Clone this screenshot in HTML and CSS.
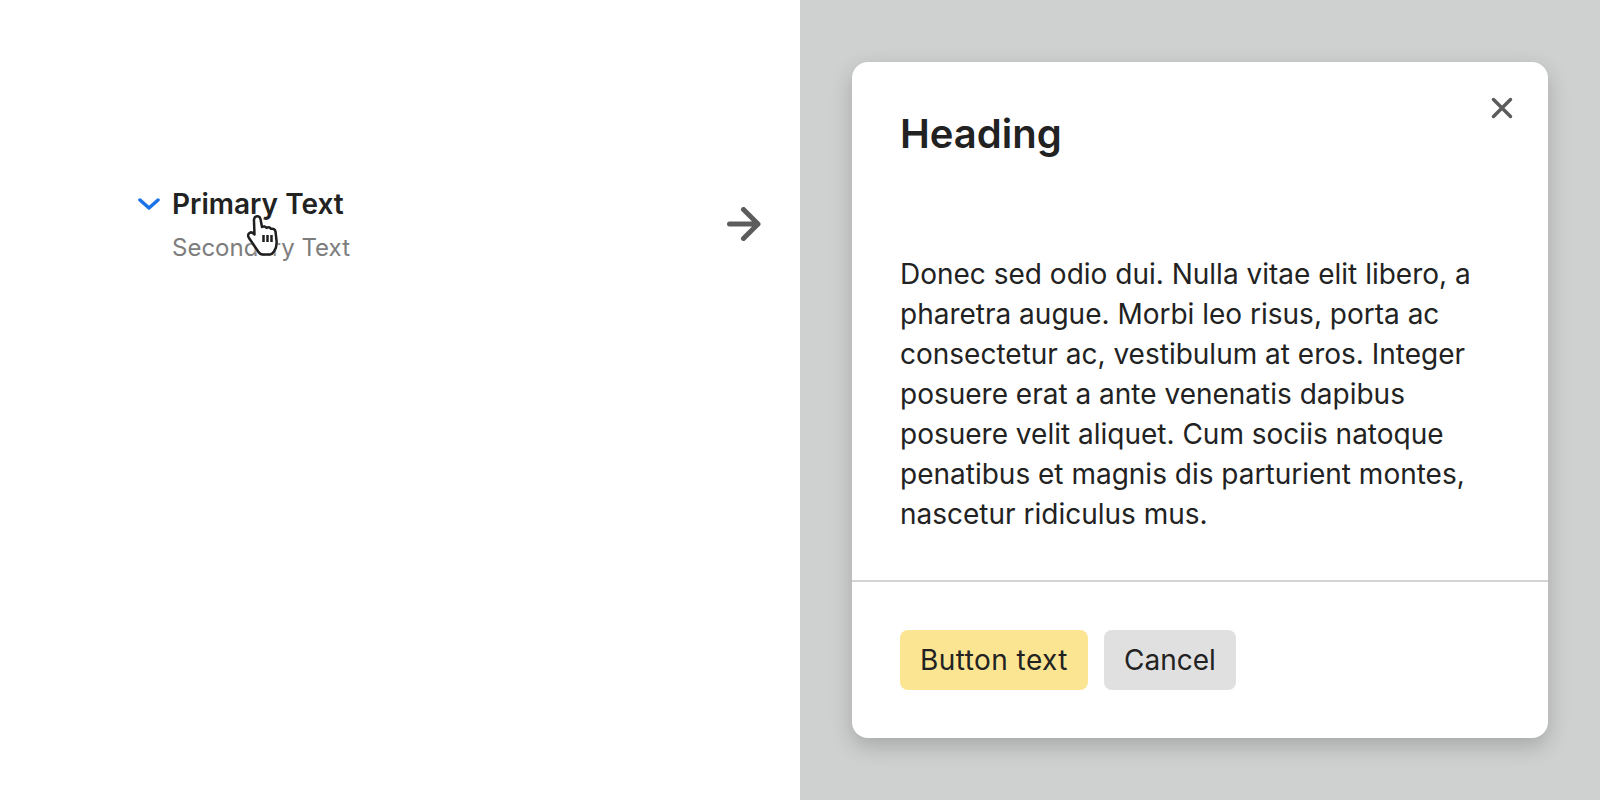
FILE: index.html
```html
<!DOCTYPE html>
<html>
<head>
	<title>Dialog</title>
	<meta charset="utf-8" />
	<link rel="stylesheet" href="styles.css">
</head>
<body>
	<div class="left_panel">
		<div class="tree_item">
			<svg class="chevron" width="22" height="12" viewBox="0 0 22 12"><path d="M2 2l9 8 9-8" /></svg>
			<div class="tree_text">
				<div class="primary_text">Primary Text</div>
				<div class="secondary_text">Secondary Text</div>
			</div>
			<svg class="hand" width="34" height="42" viewBox="0 0 34 42">
				<path class="hand_shape" d="M9 2c2.500-1.500 5-.5 5.500 2l1.500 8c1.500-1 3.500-.8 4.500.8 1.500-.8 3.500-.5 4.500 1 2-.5 4 .5 4.500 2.700l1 9c.5 4-.5 8-2.500 11-1 1.500-2 3-4 3h-7c-2 0-3.500-1-4.500-2.500L3 23c-1.500-2-1-4 .5-5 1.500-1 3.500-.5 5 1.500L8 6C7.800 4.500 8.300 3 9 2z" />
				<path class="hand_bars" d="M17.500 20v7M21.500 20v7M25.500 20v7" />
			</svg>
		</div>
		<svg class="arrow" width="34" height="34" viewBox="0 0 34 34"><path d="M2.500 17H31M16.500 2.500L31 17 16.500 31.500" /></svg>
	</div>
	<div class="right_panel">
		<div class="dialog">
			<div class="dialog_body">
				<div class="dialog_head">
					<h1 class="heading">Heading</h1>
					<svg class="close" width="24" height="24" viewBox="0 0 24 24"><path d="M3.500 3.500l17 17M20.500 3.500l-17 17" /></svg>
				</div>
				<p class="dialog_copy">Donec sed odio dui. Nulla vitae elit libero, a pharetra augue. Morbi leo risus, porta ac consectetur ac, vestibulum at eros. Integer posuere erat a ante venenatis dapibus posuere velit aliquet. Cum sociis natoque penatibus et magnis dis parturient montes, nascetur ridiculus mus.</p>
			</div>
			<div class="dialog_foot">
				<button class="btn btn_primary">Button text</button>
				<button class="btn">Cancel</button>
			</div>
		</div>
	</div>
</body>
</html>
```
FILE: styles.css
```css
html, body { margin: 0; height: 100%; }
body { display: flex; height: 800px; overflow: hidden; font-family: Inter, "Liberation Sans", sans-serif; color: #222; background-color: #fff; }

.left_panel { width: 800px; position: relative; display: flex; align-items: flex-start; justify-content: space-between; padding: 188px 39px 0 138px; box-sizing: border-box; }
.tree_item { display: flex; position: relative; }
.chevron { margin-top: 10px; margin-right: 12px; flex: none; }
.chevron path { fill: none; stroke: #1a73e8; stroke-width: 3.5; stroke-linecap: round; stroke-linejoin: round; }
.primary_text { font-size: 28px; font-weight: 600; line-height: 32px; }
.secondary_text { font-size: 24px; line-height: 32px; margin-top: 12px; color: #7d7d7d; }
.hand { position: absolute; left: 108px; top: 27px; filter: drop-shadow(0 0 2px rgba(255, 255, 255, 0.8)); }
.hand_shape { fill: #fff; stroke: #1f1f1f; stroke-width: 2.500; stroke-linejoin: round; }
.hand_bars { fill: none; stroke: #1f1f1f; stroke-width: 2.500; }
.arrow { margin-top: 19px; }
.arrow path { fill: none; stroke: #5c5c5c; stroke-width: 5; stroke-linecap: round; stroke-linejoin: round; }

.right_panel { width: 800px; background-color: #cfd1d0; padding: 62px 52px; box-sizing: border-box; }
.dialog { width: 696px; height: 676px; background-color: #fff; border-radius: 16px; box-shadow: 0 8px 22px rgba(0, 0, 0, 0.2); display: flex; flex-direction: column; }
.dialog_body { height: 520px; padding: 0 48px; box-sizing: border-box; border-bottom: 2px solid #d4d4d4; flex: none; }
.dialog_head { display: flex; justify-content: space-between; align-items: flex-start; }
.heading { margin: 44px 0 0; font-size: 40px; line-height: 56px; font-weight: 600; }
.close { margin-top: 34px; margin-right: -14px; }
.close path { fill: none; stroke: #5c5c5c; stroke-width: 3.500; stroke-linecap: round; }
.dialog_copy { margin: 92px 0 0; font-size: 28px; line-height: 40px; }
.dialog_foot { display: flex; gap: 16px; padding: 48px; }
.btn { height: 60px; padding: 0 20px; border: 0; border-radius: 8px; background-color: #e0e0e0; color: #222; font-family: inherit; font-size: 28px; }
.btn_primary { background-color: #fce592; letter-spacing: 0.45px; }
```
